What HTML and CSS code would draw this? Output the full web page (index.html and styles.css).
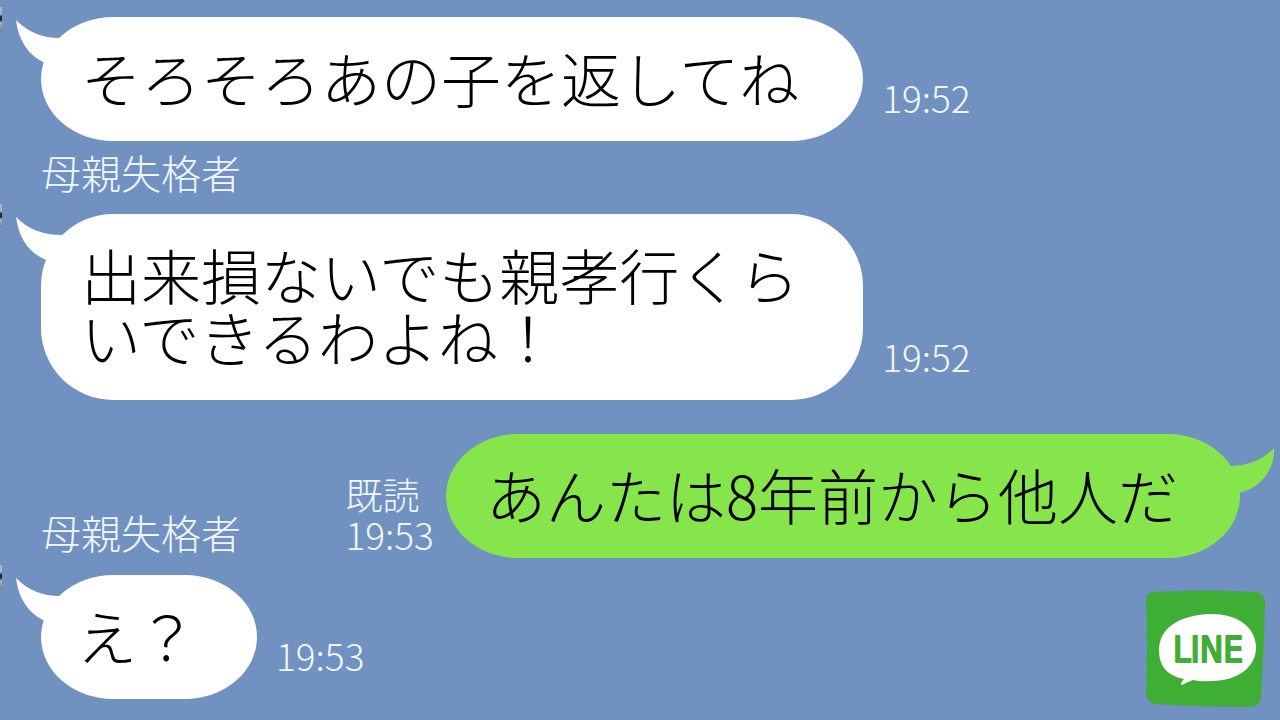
FILE: index.html
```
<!DOCTYPE html>
<html lang="ja">
<head>
<meta charset="utf-8">
<meta name="viewport" content="width=device-width, initial-scale=1">
<title>LINE</title>
<link rel="stylesheet" href="styles.css">
</head>
<body>
<main class="chat">
  <article class="message">
    <span class="avatar-edge"></span>
    <div class="bubble">
      <svg class="tail" viewBox="0 0 60 50" aria-hidden="true"><path d="M0 0C12 12 26 18 44 18L54 34L29 43C14 36 3 23 0 0Z"/></svg>
      <p class="text">そろそろあの子を返してね</p>
    </div>
    <div class="meta"><time>19:52</time></div>
  </article>

  <h2 class="sender">母親失格者</h2>
  <article class="message">
    <span class="avatar-edge"></span>
    <div class="bubble bubble-tall">
      <svg class="tail" viewBox="0 0 60 50" aria-hidden="true"><path d="M0 0C12 12 26 18 47 18L56 34L30 43C14 36 3 23 0 0Z"/></svg>
      <p class="text">出来損ないでも親孝行くら<br>いできるわよね！</p>
    </div>
    <div class="meta"><time>19:52</time></div>
  </article>

  <div class="exchange">
    <h2 class="sender">母親失格者</h2>
    <article class="message message-own">
      <div class="meta"><span>既読</span><time>19:53</time></div>
      <div class="bubble bubble-own">
        <svg class="tail tail-own" viewBox="0 0 60 50" aria-hidden="true"><path d="M60 0C48 12 34 18 16 18L6 34L25 45C46 40 61 23 60 0Z"/></svg>
        <p class="text">あんたは8年前から他人だ</p>
      </div>
    </article>
  </div>

  <article class="message">
    <span class="avatar-edge"></span>
    <div class="bubble bubble-short">
      <svg class="tail" viewBox="0 0 60 50" aria-hidden="true"><path d="M0 0C12 12 26 18 44 18L54 34L29 43C14 36 3 23 0 0Z"/></svg>
      <p class="text">え？</p>
    </div>
    <div class="meta"><time>19:53</time></div>
  </article>

  <svg class="logo" viewBox="0 0 120 118" role="img" aria-label="LINE">
    <path fill="#3eae35" d="M10 2Q58-1 111 2Q119 3 120 12Q119 58 116 107Q115 116 106 117Q55 117 10 114Q1 112 1 103Q3 55 1 11Q1 2 10 2Z"/>
    <path fill="#fff" d="M63 24C91 23 110 36 111 56C112 77 92 91 67 91Q56 92 48 90Q42 92 37 95Q34 95 39 89C22 86 14 75 14 61C14 38 33 26 63 24Z"/>
    <text class="logo-text" x="28" y="72">LINE</text>
  </svg>
</main>
</body>
</html>
```
FILE: styles.css
```
* { box-sizing: border-box; }

body {
  margin: 0;
  background: #7191c1;
  font-family: "Noto Sans CJK JP", sans-serif;
  font-weight: 300;
}

.chat {
  position: relative;
  min-height: 100vh;
  padding: 17px 40px 20px 41px;
  overflow: hidden;
}

.message {
  position: relative;
  display: flex;
  align-items: flex-end;
  gap: 19px;
}

.message-own {
  gap: 12px;
}

.bubble {
  position: relative;
  padding: 29px 64px 33px 40px;
  border-radius: 72px / 62px;
  background: #fff;
  color: #000;
}

.bubble-tall { border-radius: 72px; }

.bubble-short {
  padding-right: 60px;
  padding-left: 36px;
}

.bubble-own {
  padding-right: 62px;
  background: #86e54a;
}

.text {
  margin: 0;
  font-size: 60px;
  line-height: 62px;
}

.tail {
  position: absolute;
  top: 3px;
  left: -25px;
  width: 60px;
  height: 50px;
  fill: #fff;
}

.tail-own {
  top: 14px;
  right: -34px;
  left: auto;
  fill: #86e54a;
}

.sender {
  margin: 0;
  padding: 7px 0 18px;
  color: #f2f6ff;
  font-size: 40px;
  font-weight: inherit;
  line-height: 48px;
}

.meta {
  display: flex;
  flex-direction: column;
  padding-bottom: 24px;
  color: #f2f6ff;
  font-size: 37px;
  line-height: 40px;
}

.message-own .meta { padding-bottom: 4px; }

.exchange {
  display: flex;
  justify-content: space-between;
  align-items: flex-end;
  margin: 34px 0 17px;
}

.exchange .sender { padding: 0 0 2px; }

.avatar-edge {
  position: absolute;
  top: -10px;
  left: -41px;
  width: 2px;
  height: 24px;
  background: linear-gradient(#a9b4c8, #a9b4c8 30%, #222a38 40%, #222a38 55%, #aeb4c0 65%, #75799a);
}

.logo {
  position: absolute;
  right: 15px;
  bottom: 12px;
  width: 120px;
  height: 118px;
}

.logo-text {
  fill: #3eae35;
  stroke: #3eae35;
  stroke-width: 2px;
  stroke-linejoin: round;
  font-family: "DejaVu Sans Condensed", "DejaVu Sans", sans-serif;
  font-size: 35px;
  font-weight: 400;
}
```
